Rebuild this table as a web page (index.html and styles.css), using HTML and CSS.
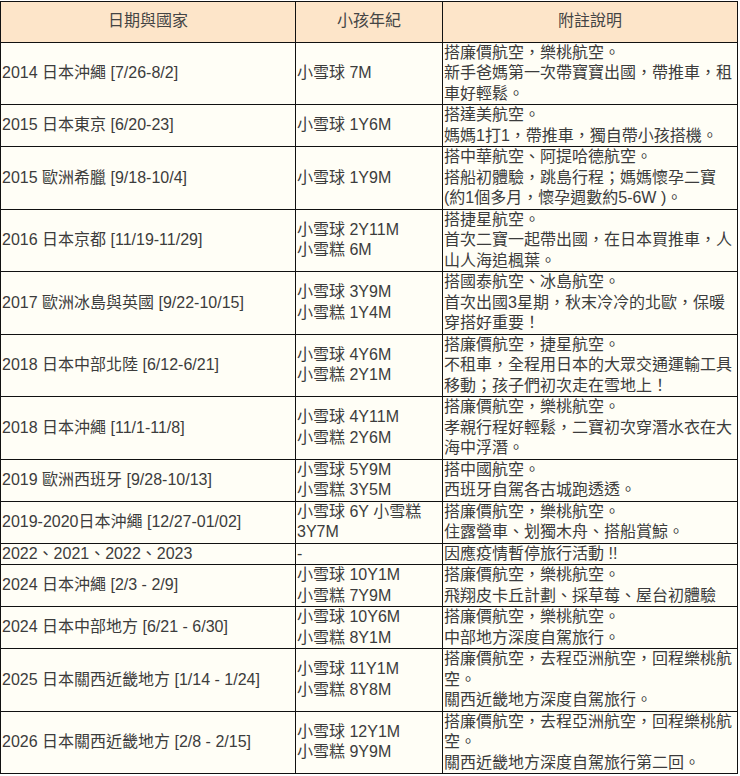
FILE: index.html
```html
<!DOCTYPE html>
<html lang="zh-Hant">
<head>
<meta charset="utf-8">
<link rel="stylesheet" href="styles.css">
</head>
<body>
<table class="trips">
  <colgroup>
    <col class="c-date">
    <col class="c-age">
    <col class="c-note">
  </colgroup>
  <thead>
    <tr><th>日期與國家</th><th>小孩年紀</th><th>附註說明</th></tr>
  </thead>
  <tbody>
    <tr><td>2014 日本沖繩 [7/26-8/2]</td><td>小雪球 7M</td><td class="note">搭廉價航空，樂桃航空。<br>新手爸媽第一次帶寶寶出國，帶推車，租車好輕鬆。</td></tr>
    <tr><td>2015 日本東京 [6/20-23]</td><td>小雪球 1Y6M</td><td class="note">搭達美航空。<br>媽媽1打1，帶推車，獨自帶小孩搭機。</td></tr>
    <tr><td>2015 歐洲希臘 [9/18-10/4]</td><td>小雪球 1Y9M</td><td class="note">搭中華航空、阿提哈德航空。<br>搭船初體驗，跳島行程；媽媽懷孕二寶(約1個多月，懷孕週數約5-6W )。</td></tr>
    <tr><td>2016 日本京都 [11/19-11/29]</td><td>小雪球 2Y11M<br>小雪糕 6M</td><td class="note">搭捷星航空。<br>首次二寶一起帶出國，在日本買推車，人山人海追楓葉。</td></tr>
    <tr><td>2017 歐洲冰島與英國 [9/22-10/15]</td><td>小雪球 3Y9M<br>小雪糕 1Y4M</td><td class="note">搭國泰航空、冰島航空。<br>首次出國3星期，秋末冷冷的北歐，保暖穿搭好重要！</td></tr>
    <tr><td>2018 日本中部北陸 [6/12-6/21]</td><td>小雪球 4Y6M<br>小雪糕 2Y1M</td><td class="note">搭廉價航空，捷星航空。<br>不租車，全程用日本的大眾交通運輸工具移動；孩子們初次走在雪地上！</td></tr>
    <tr><td>2018 日本沖繩 [11/1-11/8]</td><td>小雪球 4Y11M<br>小雪糕 2Y6M</td><td class="note">搭廉價航空，樂桃航空。<br>孝親行程好輕鬆，二寶初次穿潛水衣在大海中浮潛。</td></tr>
    <tr><td>2019 歐洲西班牙 [9/28-10/13]</td><td>小雪球 5Y9M<br>小雪糕 3Y5M</td><td class="note">搭中國航空。<br>西班牙自駕各古城跑透透。</td></tr>
    <tr><td>2019-2020日本沖繩 [12/27-01/02]</td><td>小雪球 6Y 小雪糕 3Y7M</td><td class="note">搭廉價航空，樂桃航空。<br>住露營車、划獨木舟、搭船賞鯨。</td></tr>
    <tr><td>2022、2021、2022、2023</td><td>-</td><td class="note">因應疫情暫停旅行活動 !!</td></tr>
    <tr><td>2024 日本沖繩 [2/3 - 2/9]</td><td>小雪球 10Y1M<br>小雪糕 7Y9M</td><td class="note">搭廉價航空，樂桃航空。<br>飛翔皮卡丘計劃、採草莓、屋台初體驗</td></tr>
    <tr><td>2024 日本中部地方 [6/21 - 6/30]</td><td>小雪球 10Y6M<br>小雪糕 8Y1M</td><td class="note">搭廉價航空，樂桃航空。<br>中部地方深度自駕旅行。</td></tr>
    <tr><td>2025 日本關西近畿地方 [1/14 - 1/24]</td><td>小雪球 11Y1M<br>小雪糕 8Y8M</td><td class="note">搭廉價航空，去程亞洲航空，回程樂桃航空。<br>關西近畿地方深度自駕旅行。</td></tr>
    <tr><td>2026 日本關西近畿地方 [2/8 - 2/15]</td><td>小雪球 12Y1M<br>小雪糕 9Y9M</td><td class="note">搭廉價航空，去程亞洲航空，回程樂桃航空。<br>關西近畿地方深度自駕旅行第二回。</td></tr>
  </tbody>
</table>
</body>
</html>
```

FILE: styles.css
```css
html, body {
  margin: 0;
  padding: 0;
  background: #ffffff;
}

body {
  padding-top: 1px;
}

.trips {
  border-collapse: collapse;
  table-layout: fixed;
  width: 737px;
  font-family: "Liberation Sans", "Noto Sans CJK TC", sans-serif;
  font-size: 16px;
  color: #3c3c3c;
  background: #fffef6;
}

.c-date { width: 295px; }
.c-age { width: 147px; }
.c-note { width: 295px; }

.trips th,
.trips td {
  border: 1px solid #111111;
  line-height: 20.5px;
  vertical-align: middle;
  text-align: left;
  padding: 0 1px;
}

.trips th {
  background: #fde5c9;
  font-weight: normal;
  text-align: center;
  padding: 9px 1px 10px;
  color: #444444;
}

.trips td.note {
  vertical-align: top;
}
```
